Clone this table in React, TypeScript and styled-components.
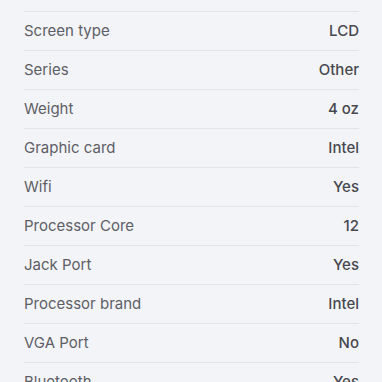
import React from "react";
import styled, { createGlobalStyle } from "styled-components";

const Global = createGlobalStyle`
  html, body { margin: 0; padding: 0; background: #f3f4f8; }
  body { font-family: Inter, "Noto Sans", sans-serif; }
`;

const Page = styled.div`
  width: 382px;
  height: 382px;
  overflow: hidden;
  background: #f3f4f8;
  padding: 11px 23px 0 24px;
  box-sizing: border-box;
`;

const List = styled.div`
  display: flex;
  flex-direction: column;
  border-top: 1px solid #e3e4ea;
`;

const Row = styled.div`
  display: flex;
  align-items: center;
  justify-content: space-between;
  height: 39px;
  border-bottom: 1px solid #e3e4ea;
  font-size: 15px;
  line-height: 18px;
  box-sizing: border-box;
  flex-shrink: 0;
`;

const Label = styled.span`
  color: #5e5e66;
  font-weight: 400;
`;

const Value = styled.span`
  color: #48484f;
  font-weight: 500;
`;

const specs: [string, string][] = [
  ["Screen type", "LCD"],
  ["Series", "Other"],
  ["Weight", "4 oz"],
  ["Graphic card", "Intel"],
  ["Wifi", "Yes"],
  ["Processor Core", "12"],
  ["Jack Port", "Yes"],
  ["Processor brand", "Intel"],
  ["VGA Port", "No"],
  ["Bluetooth", "Yes"],
];

export default function App() {
  return (
    <>
      <Global />
      <Page>
        <List>
          {specs.map(([k, v]) => (
            <Row key={k}>
              <Label>{k}</Label>
              <Value>{v}</Value>
            </Row>
          ))}
        </List>
      </Page>
    </>
  );
}
